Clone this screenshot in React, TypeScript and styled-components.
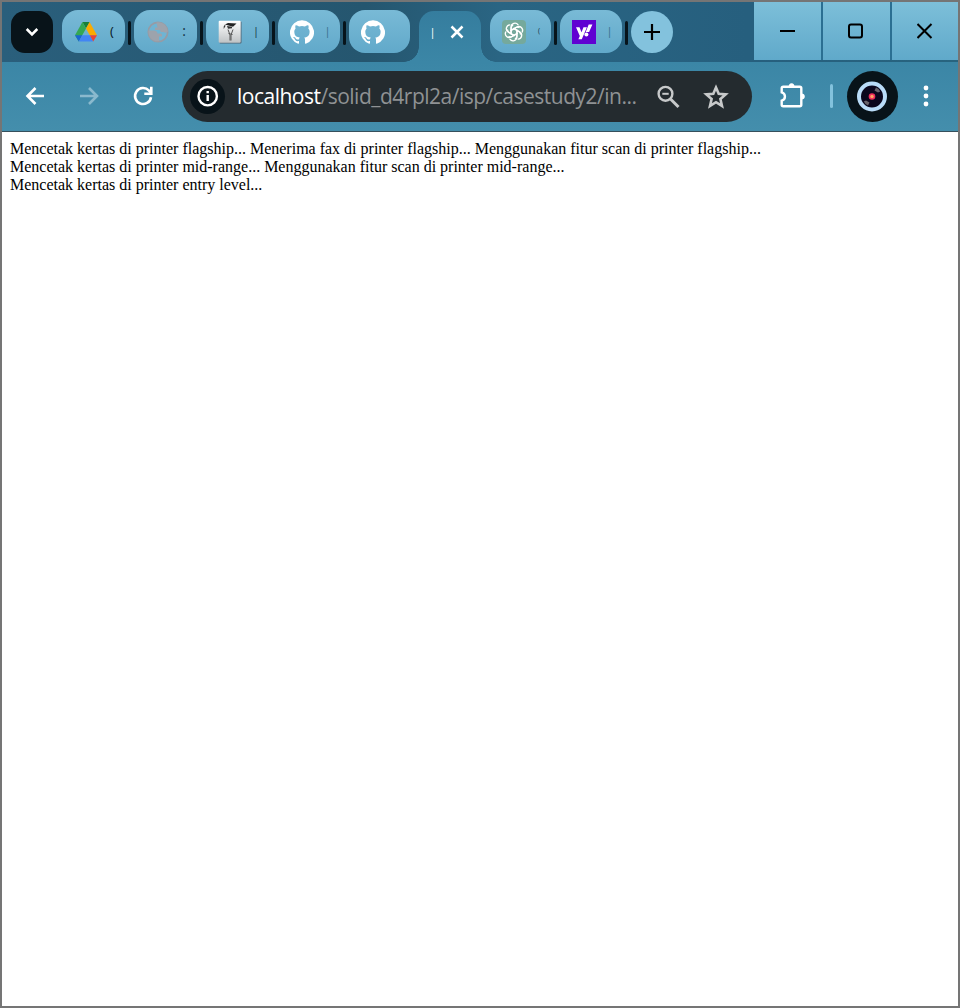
import React from 'react';
import styled, { createGlobalStyle } from 'styled-components';

const GlobalStyle = createGlobalStyle`
  * { box-sizing: border-box; }
  body { margin: 0; background: #fff; }
  svg { display: block; flex: none; }
`;

const BrowserWindow = styled.div`
  width: 960px;
  height: 1008px;
  border: 2px solid #757575;
  background: #fff;
  display: flex;
  flex-direction: column;
  overflow: hidden;
`;

const TabStrip = styled.div`
  height: 60px;
  flex: none;
  display: flex;
  align-items: flex-start;
  padding-left: 9px;
  background: linear-gradient(90deg, #2a5f7c 0%, #25566f 38%, #2a6583 52%, #265f7e 78%, #28647f 100%);
`;

const MenuButton = styled.div`
  width: 42px;
  height: 42px;
  margin: 9px 9px 0 0;
  border-radius: 14px;
  background: #081319;
  display: flex;
  align-items: center;
  justify-content: center;
`;

const Tab = styled.div<{ $width?: number }>`
  width: ${p => p.$width ?? 63}px;
  height: 42.5px;
  margin-top: 8.2px;
  padding: 1px 0 0 12px;
  border-radius: 16px;
  background: linear-gradient(#79bad6, #61a9ca);
  display: flex;
  align-items: center;
  flex: none;
`;

const Separator = styled.div`
  width: 3px;
  height: 24px;
  margin: 19px 3px 0;
  border-radius: 1.5px;
  background: #07141b;
  flex: none;
`;

const TabTitle = styled.span<{ $size?: number; $gap?: number; $color?: string }>`
  width: 6px;
  margin-left: ${p => p.$gap ?? 10}px;
  padding-bottom: 1px;
  white-space: nowrap;
  text-align: center;
  font: ${p => p.$size ?? 11}px/22px 'Open Sans', sans-serif;
  color: ${p => p.$color ?? '#14313f'};
`;

const ActiveTab = styled.div`
  position: relative;
  width: 62px;
  height: 51px;
  margin: 9px 9px 0;
  padding: 0 0 9px 10px;
  border-radius: 15px 15px 0 0;
  background: linear-gradient(#357d9e, #3b86a6);
  display: flex;
  align-items: center;
  flex: none;
  &::before, &::after {
    content: '';
    position: absolute;
    bottom: 0;
    width: 15px;
    height: 15px;
  }
  &::before { left: -15px; background: radial-gradient(circle at 0 0, transparent 14.5px, #3b86a6 15px); }
  &::after { right: -15px; background: radial-gradient(circle at 100% 0, transparent 14.5px, #3b86a6 15px); }
`;

const CloseIcon = styled.svg`
  margin-left: 14px;
`;

const NewTab = styled.div`
  width: 42px;
  height: 42px;
  margin-top: 9px;
  border-radius: 50%;
  background: #83c2dd;
  display: flex;
  align-items: center;
  justify-content: center;
`;

const WindowControls = styled.div`
  margin-left: auto;
  height: 58px;
  display: flex;
  gap: 2px;
  background: #2b6f92;
`;

const ControlButton = styled.div<{ $width: number }>`
  width: ${p => p.$width}px;
  padding-right: 1px;
  background: linear-gradient(#7dbfd9, #60a9ca);
  display: flex;
  align-items: center;
  justify-content: center;
`;

const Toolbar = styled.div`
  height: 70px;
  flex: none;
  display: flex;
  align-items: center;
  padding-left: 21px;
  padding-bottom: 1px;
  border-bottom: 1px solid #36505c;
  background: linear-gradient(#3b86a6, #448eac);
`;

const NavButtons = styled.div`
  width: 159px;
  display: flex;
  gap: 30px;
`;

const AddressBar = styled.div`
  width: 570px;
  height: 51px;
  padding-left: 8px;
  border-radius: 26px;
  background: #242b2f;
  display: flex;
  align-items: center;
`;

const SiteInfo = styled.div`
  width: 35px;
  height: 35px;
  border-radius: 50%;
  background: #081319;
  display: flex;
  align-items: center;
  justify-content: center;
`;

const Url = styled.div`
  width: 417.5px;
  margin-left: 12px;
  white-space: nowrap;
  font: 21px/30px 'Open Sans', 'Segoe UI', sans-serif;
  letter-spacing: -0.5px;
  color: #8f9294;
`;

const Host = styled.span`
  color: #fff;
`;

const AddressActions = styled.div`
  display: flex;
  gap: 22.5px;
  padding-top: 1px;
`;

const Divider = styled.div`
  width: 3px;
  height: 24px;
  margin: 0 14px 0 24px;
  border-radius: 1.5px;
  background: #83c2dd;
`;

const Extensions = styled.svg`
  margin-left: 26px;
`;

const Avatar = styled.div`
  width: 51px;
  height: 51px;
  margin-right: 14px;
  border-radius: 50%;
  background: #081319;
  display: flex;
  align-items: center;
  justify-content: center;
`;

const Page = styled.main`
  padding: 8px;
  font: 16px/18px 'Liberation Serif', 'Times New Roman', serif;
  color: #000;
`;

const Line = styled.div`
  height: 18px;
  white-space: nowrap;
`;

const DriveIcon = () => (
  <svg width="24" height="24" viewBox="0 0 24 24">
    <path d="M8.4 2h7.2L12 8.5z" fill="#188038" />
    <path d="M8.4 2 12 8.5 4.8 21.5 1 15.3z" fill="#34a853" />
    <path d="M15.6 2 23 15.3h-7.2L12 8.5z" fill="#fbab00" />
    <path d="M1 15.3h7.2l-3.4 6.2z" fill="#1967d2" />
    <path d="M8.2 15.3h7.6l3.4 6.2H4.8z" fill="#4285f4" />
    <path d="M15.8 15.3H23l-3.8 6.2z" fill="#ea4335" />
  </svg>
);

const GlobeIcon = () => (
  <svg width="24" height="24" viewBox="0 0 24 24">
    <circle cx="12" cy="12" r="9.7" fill="#6fb4d3" stroke="#969ba5" strokeWidth="1.7" />
    <path d="M2.5 10.5h5.500q3 0 3.500 3h3q1.500 0 1.500 1.500v1.500h-3v4.800C6 22 2 17 2.500 10.500z" fill="#9da3ac" />
    <path d="M10.5 2.500c6-1 10.800 3 11.200 9-1 1.500-3 1.500-4 .5h-3q0-2-1.500-2H9V7.500h2.500z" fill="#9da3ac" />
  </svg>
);

const GraduateIcon = () => (
  <svg width="24" height="24" viewBox="0 0 24 24">
    <defs>
      <linearGradient id="paper" x1="0" y1="0" x2="0" y2="1">
        <stop stopColor="#fff" /><stop offset="1" stopColor="#bfc3c5" />
      </linearGradient>
    </defs>
    <rect x="1.5" y="1.5" width="22" height="22" rx="1" fill="#506575" />
    <rect x=".7" y=".7" width="22" height="22" rx="1" fill="url(#paper)" />
    <path d="m7 4.500 3-1.500 8.500.5-3.500 3.200z" fill="#222" />
    <path d="m7 4.500-1.300 2v2.500L7.500 6zM9 6l5 .8v1.500l-4 .5z" fill="#333" />
    <path d="m10 9.500 2 5.500v5.500M15 9.500 13 15v5.500M10.500 13.500l4 1" fill="none" stroke="#555" strokeWidth="1" />
  </svg>
);

const GithubIcon = () => (
  <svg width="24" height="24" viewBox="0 0 24 24">
    <path fill="#fff" d="M12 .3a12 12 0 0 0-3.8 23.4c.6.1.8-.3.8-.6v-2c-3.3.7-4-1.6-4-1.6-.6-1.4-1.4-1.8-1.4-1.8-1-.7.1-.7.1-.7 1.2 0 1.9 1.2 1.9 1.2 1 1.8 2.8 1.3 3.5 1 0-.8.4-1.3.7-1.6-2.7-.3-5.5-1.3-5.5-6 0-1.2.5-2.3 1.3-3.1-.2-.4-.6-1.6 0-3.2 0 0 1-.3 3.4 1.2a11.5 11.5 0 0 1 6 0c2.3-1.5 3.3-1.2 3.3-1.2.6 1.6.2 2.8 0 3.2.9.8 1.3 1.9 1.3 3.2 0 4.6-2.8 5.6-5.5 5.9.5.4.9 1 .9 2.2v3.3c0 .3.1.7.8.6A12 12 0 0 0 12 .3" />
  </svg>
);

const ChatIcon = () => (
  <svg width="24" height="24" viewBox="0 0 24 24">
    <rect width="24" height="24" rx="4" fill="#75a99c" />
    <g fill="none" stroke="#fff" strokeWidth="1.35" strokeLinejoin="round" strokeLinecap="round">
      {[0, 60, 120, 180, 240, 300].map(angle => (
        <path key={angle} transform={`rotate(${angle} 12 12)`} d="M9.1 14.1V7.2c0-4 4.8-5.4 7-2.4M9.1 10.3l4.9-2.8c1.1-.6 2-.6 3 0" />
      ))}
    </g>
  </svg>
);

const YahooIcon = () => (
  <svg width="24" height="24" viewBox="0 0 24 24">
    <rect width="24" height="24" fill="#6001d2" />
    <path d="M4 7.2h3.5l2 5.1 2-5.1h3.4L9.8 19.3H6.4l1.4-3.2zM16.7 4.5h3.7L17.1 12h-3.4z" fill="#fff" />
    <circle cx="14.4" cy="14.6" r="2" fill="#fff" />
  </svg>
);

const ArrowIcon = ({ forward = false }: { forward?: boolean }) => (
  <svg width="24" height="24" viewBox="0 0 24 24">
    <path
      d={forward ? 'M3 12h17M12 4l8 8-8 8' : 'M21 12H4.500M12.500 4l-8 8 8 8'}
      fill="none" stroke={forward ? '#8ab9cd' : '#fff'} strokeWidth="2.6"
    />
  </svg>
);

const ReloadIcon = () => (
  <svg width="24" height="24" viewBox="0 0 24 24">
    <path d="M20 13.200A8 8 0 1 1 18 6.600L20 9" fill="none" stroke="#fff" strokeWidth="2.6" />
    <path d="M20.300 2.800v7h-7" fill="none" stroke="#fff" strokeWidth="2.6" />
  </svg>
);

const VinylIcon = () => (
  <svg width="31" height="31" viewBox="0 0 31 31">
    <circle cx="15" cy="15.5" r="13" fill="#0b071d" stroke="#b9dcf8" strokeWidth="4" />
    <path d="m17.500 9.500 1.500-3q3 1.200 4.200 4l-2.200 1zM12.500 21.500 11 24.500q-3-1.200-4.200-4l2.200-1z" fill="#a5a29f" opacity=".6" />
    <circle cx="15" cy="15.5" r="3.3" fill="#f02d5e" />
    <circle cx="15" cy="15.5" r="1.7" fill="#ffa562" />
  </svg>
);

export default function App() {
  return (
    <>
      <GlobalStyle />
      <BrowserWindow>
        <TabStrip>
          <MenuButton>
            <svg width="14" height="10" viewBox="0 0 14 10"><path d="m1.7 2 5.300 5.300L12.300 2" fill="none" stroke="#fff" strokeWidth="2.6" /></svg>
          </MenuButton>
          <Tab><DriveIcon /><TabTitle $size={13} $gap={11} $color="#07141b">(</TabTitle></Tab>
          <Separator />
          <Tab><GlobeIcon /><TabTitle $size={14} $gap={11}>:</TabTitle></Tab>
          <Separator />
          <Tab><GraduateIcon /><TabTitle $gap={11}>|</TabTitle></Tab>
          <Separator />
          <Tab $width={62}><GithubIcon /><TabTitle $gap={10.5} $color="#386f8b">|</TabTitle></Tab>
          <Separator />
          <Tab $width={61}><GithubIcon /></Tab>
          <ActiveTab>
            <TabTitle $gap={0.5} $color="#fff">|</TabTitle>
            <CloseIcon width="14" height="14" viewBox="0 0 14 14"><path d="m1.500 1.500 11 11m0-11-11 11" stroke="#fff" strokeWidth="2.5" /></CloseIcon>
          </ActiveTab>
          <Tab $width={61}><ChatIcon /><TabTitle $size={7}>(</TabTitle></Tab>
          <Separator />
          <Tab $width={62}><YahooIcon /><TabTitle $gap={10.5} $color="#386f8b">|</TabTitle></Tab>
          <Separator />
          <NewTab>
            <svg width="16" height="16" viewBox="0 0 16 16"><path d="M8 0v16M0 8h16" stroke="#000" strokeWidth="2.2" /></svg>
          </NewTab>
          <WindowControls>
            <ControlButton $width={67}>
              <svg width="16" height="16" viewBox="0 0 16 16"><path d="M1 8h15" stroke="#000" strokeWidth="2" /></svg>
            </ControlButton>
            <ControlButton $width={67}>
              <svg width="16" height="16" viewBox="0 0 16 16"><rect x="1" y="1.5" width="13" height="13" rx="2" fill="none" stroke="#000" strokeWidth="2" /></svg>
            </ControlButton>
            <ControlButton $width={66}>
              <svg width="16" height="16" viewBox="0 0 16 16"><path d="m.5 1 14 14m0-14L.5 15" stroke="#000" strokeWidth="2" /></svg>
            </ControlButton>
          </WindowControls>
        </TabStrip>
        <Toolbar>
          <NavButtons><ArrowIcon /><ArrowIcon forward /><ReloadIcon /></NavButtons>
          <AddressBar>
            <SiteInfo>
              <svg width="22" height="22" viewBox="0 0 22 22"><circle cx="10.7" cy="11.2" r="9.2" fill="none" stroke="#fff" strokeWidth="2.4" /><path d="M10.7 10v6M10.7 6v2.200" stroke="#fff" strokeWidth="2.4" /></svg>
            </SiteInfo>
            <Url><Host>localhost</Host>/solid_d4rpl2a/isp/casestudy2/in...</Url>
            <AddressActions>
              <svg width="26" height="26" viewBox="0 0 26 26"><g fill="none" stroke="#c7c9ca" strokeWidth="2.4"><circle cx="10.5" cy="9.8" r="6.9" /><path d="m15.500 15 8 8" strokeWidth="3" /><path d="M7.300 9.800h6.400" strokeWidth="2" /></g></svg>
              <svg width="26" height="26" viewBox="0 0 26 26"><path d="m13 3.500 2.700 6.300 7 .6-5.300 4.600 1.600 6.900-6-3.700-6 3.700 1.600-6.900-5.300-4.600 7-.6z" fill="none" stroke="#c7c9ca" strokeWidth="2.6" /></svg>
            </AddressActions>
          </AddressBar>
          <Extensions width="28" height="28" viewBox="0 0 28 28">
            <path d="M5.200 4.800H21.800q1.500 0 1.500 1.500V22.700q0 1.500-1.500 1.500H5.200q-1.500 0-1.500-1.500V18.700C8 17.500 8 11.500 3.700 10.300V6.300q0-1.500 1.500-1.500z" fill="none" stroke="#fff" strokeWidth="2.4" />
            <path d="M10.700 4.800a2.900 3.500 0 0 1 5.800 0zM23.300 11.600a3.500 2.900 0 0 1 0 5.800z" fill="#fff" />
          </Extensions>
          <Divider />
          <Avatar><VinylIcon /></Avatar>
          <svg width="28" height="28" viewBox="0 0 28 28"><g fill="#fff"><circle cx="14" cy="6" r="2.4" /><circle cx="14" cy="14" r="2.4" /><circle cx="14" cy="22" r="2.4" /></g></svg>
        </Toolbar>
        <Page>
          <Line>Mencetak kertas di printer flagship... Menerima fax di printer flagship... Menggunakan fitur scan di printer flagship...</Line>
          <Line>Mencetak kertas di printer mid-range... Menggunakan fitur scan di printer mid-range...</Line>
          <Line>Mencetak kertas di printer entry level...</Line>
        </Page>
      </BrowserWindow>
    </>
  );
}
